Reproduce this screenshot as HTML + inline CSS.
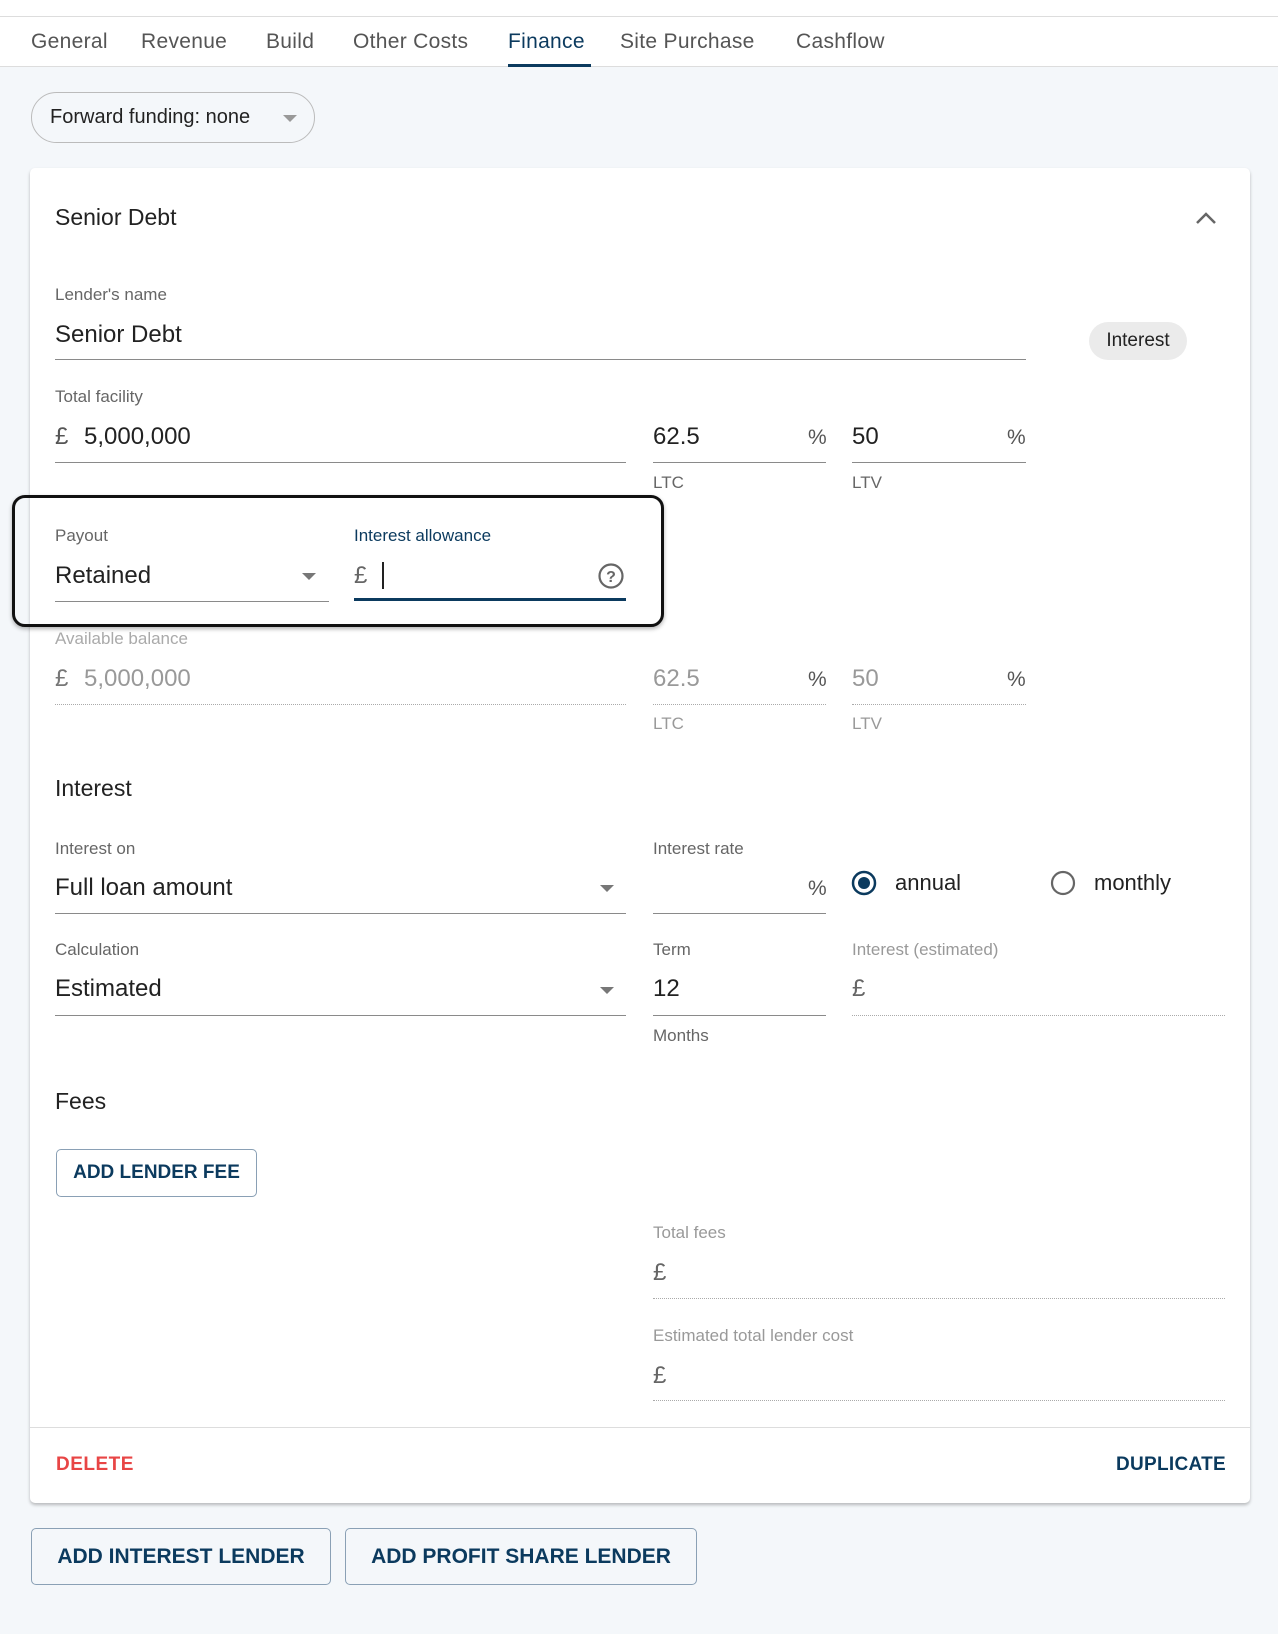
<!DOCTYPE html>
<html><head><meta charset="utf-8"><style>
*{margin:0;padding:0;box-sizing:border-box}
body{width:1278px;height:1634px;background:#f4f7fa;font-family:"Liberation Sans",sans-serif;position:relative;overflow:hidden;color:#222}
.a{position:absolute;white-space:nowrap}
.t{height:30px;line-height:30px}
.lab{font-size:17px;color:#666}
.val{font-size:24px;color:#222}
.dis{color:#999}
.ul{position:absolute;height:1px;background:#8a8a8a}
.dot{position:absolute;height:0;border-top:1px dotted #aaa}
.btn{position:absolute;border:1px solid #8aa0b5;border-radius:5px;color:#0b3a5e;font-weight:bold;letter-spacing:0;display:flex;align-items:center;justify-content:center}
.tab{font-size:21px;color:#555;letter-spacing:.3px}
</style></head><body>
<div class="a" style="left:0;top:0;width:1278px;height:67px;background:#fff;border-bottom:1px solid #ddd"></div>
<div class="a" style="left:0;top:16px;width:1278px;height:1px;background:#ddd"></div>
<div class="a t tab" style="left:31px;top:27px">General</div>
<div class="a t tab" style="left:141px;top:27px">Revenue</div>
<div class="a t tab" style="left:266px;top:27px">Build</div>
<div class="a t tab" style="left:353px;top:27px">Other Costs</div>
<div class="a t tab" style="left:508px;top:27px;color:#0b3a5e">Finance</div>
<div class="a" style="left:508px;top:64px;width:83px;height:3px;background:#0b3a5e"></div>
<div class="a t tab" style="left:620px;top:27px">Site Purchase</div>
<div class="a t tab" style="left:796px;top:27px">Cashflow</div>

<div class="a" style="left:31px;top:92px;width:284px;height:51px;border:1px solid #bbb;border-radius:26px;background:#f4f7fa"></div>
<div class="a t" style="left:50px;top:102px;font-size:20px;color:#222">Forward funding: none</div>
<div class="a" style="left:283px;top:115px;border-left:7px solid transparent;border-right:7px solid transparent;border-top:7px solid #999"></div>

<div class="a" style="left:30px;top:168px;width:1220px;height:1335px;background:#fff;border-radius:5px;box-shadow:0 2px 3px rgba(0,0,0,.25)"></div>
<div class="a t" style="left:55px;top:202px;font-size:23px">Senior Debt</div>
<svg class="a" style="left:1194px;top:208px" width="24" height="20"><path d="M3 15 L12 6 L21 15" fill="none" stroke="#666" stroke-width="2.5"/></svg>

<div class="a t lab" style="left:55px;top:280px">Lender's name</div>
<div class="a t val" style="left:55px;top:320px">Senior Debt</div>
<div class="ul" style="left:55px;top:359px;width:971px"></div>
<div class="a" style="left:1089px;top:322px;width:98px;height:38px;border-radius:19px;background:#ebebeb;font-size:19px;line-height:38px;text-align:center;color:#222">Interest</div>

<div class="a t lab" style="left:55px;top:382px">Total facility</div>
<div class="a t val" style="left:55px;top:422px;color:#555">£</div>
<div class="a t val" style="left:84px;top:422px">5,000,000</div>
<div class="ul" style="left:55px;top:462px;width:571px"></div>
<div class="a t val" style="left:653px;top:422px">62.5</div>
<div class="a t val" style="left:808px;top:423px;font-size:21px;color:#555">%</div>
<div class="ul" style="left:653px;top:462px;width:173px"></div>
<div class="a t val" style="left:852px;top:422px">50</div>
<div class="a t val" style="left:1007px;top:423px;font-size:21px;color:#555">%</div>
<div class="ul" style="left:852px;top:462px;width:174px"></div>
<div class="a t lab" style="left:653px;top:468px">LTC</div>
<div class="a t lab" style="left:852px;top:468px">LTV</div>

<div class="a" style="left:12px;top:495px;width:652px;height:132px;border:3px solid #111;border-radius:13px;box-shadow:0 2px 4px rgba(0,0,0,.3)"></div>
<div class="a t lab" style="left:55px;top:521px">Payout</div>
<div class="a t val" style="left:55px;top:561px">Retained</div>
<div class="a" style="left:302px;top:573px;border-left:7px solid transparent;border-right:7px solid transparent;border-top:7px solid #777"></div>
<div class="ul" style="left:55px;top:601px;width:274px"></div>
<div class="a t lab" style="left:354px;top:521px;color:#0b3a5e">Interest allowance</div>
<div class="a t val" style="left:354px;top:561px;color:#666">£</div>
<div class="a" style="left:382px;top:562px;width:2px;height:27px;background:#222"></div>
<svg class="a" style="left:597px;top:562px" width="28" height="28"><circle cx="14" cy="14" r="11.5" fill="none" stroke="#666" stroke-width="2.2"/><text x="14" y="20" text-anchor="middle" font-family="Liberation Sans" font-size="16" font-weight="bold" fill="#666">?</text></svg>
<div class="a" style="left:354px;top:598px;width:272px;height:3px;background:#0b3a5e"></div>

<div class="a t lab dis" style="left:55px;top:624px;color:#aaa">Available balance</div>
<div class="a t val dis" style="left:55px;top:664px;color:#777">£</div>
<div class="a t val dis" style="left:84px;top:664px">5,000,000</div>
<div class="dot" style="left:55px;top:704px;width:571px"></div>
<div class="a t val dis" style="left:653px;top:664px">62.5</div>
<div class="a t val" style="left:808px;top:665px;font-size:21px;color:#555">%</div>
<div class="dot" style="left:653px;top:704px;width:173px"></div>
<div class="a t val dis" style="left:852px;top:664px">50</div>
<div class="a t val" style="left:1007px;top:665px;font-size:21px;color:#555">%</div>
<div class="dot" style="left:852px;top:704px;width:174px"></div>
<div class="a t lab" style="left:653px;top:709px;color:#999">LTC</div>
<div class="a t lab" style="left:852px;top:709px;color:#999">LTV</div>

<div class="a t" style="left:55px;top:773px;font-size:23px">Interest</div>

<div class="a t lab" style="left:55px;top:834px">Interest on</div>
<div class="a t val" style="left:55px;top:873px">Full loan amount</div>
<div class="a" style="left:600px;top:885px;border-left:7px solid transparent;border-right:7px solid transparent;border-top:7px solid #777"></div>
<div class="ul" style="left:55px;top:913px;width:571px"></div>
<div class="a t lab" style="left:653px;top:834px">Interest rate</div>
<div class="a t val" style="left:808px;top:874px;font-size:21px;color:#555">%</div>
<div class="ul" style="left:653px;top:913px;width:173px"></div>
<svg class="a" style="left:850px;top:869px" width="28" height="28"><circle cx="14" cy="14" r="11" fill="none" stroke="#0b3a5e" stroke-width="2.5"/><circle cx="14" cy="14" r="6" fill="#0b3a5e"/></svg>
<div class="a t val" style="left:895px;top:868px;font-size:22px">annual</div>
<svg class="a" style="left:1049px;top:869px" width="28" height="28"><circle cx="14" cy="14" r="11" fill="none" stroke="#666" stroke-width="2.2"/></svg>
<div class="a t val" style="left:1094px;top:868px;font-size:22px">monthly</div>

<div class="a t lab" style="left:55px;top:935px">Calculation</div>
<div class="a t val" style="left:55px;top:974px">Estimated</div>
<div class="a" style="left:600px;top:987px;border-left:7px solid transparent;border-right:7px solid transparent;border-top:7px solid #777"></div>
<div class="ul" style="left:55px;top:1015px;width:571px"></div>
<div class="a t lab" style="left:653px;top:935px">Term</div>
<div class="a t val" style="left:653px;top:974px">12</div>
<div class="ul" style="left:653px;top:1015px;width:173px"></div>
<div class="a t lab" style="left:653px;top:1021px">Months</div>
<div class="a t lab" style="left:852px;top:935px;color:#999">Interest (estimated)</div>
<div class="a t val" style="left:852px;top:974px;color:#666">£</div>
<div class="dot" style="left:852px;top:1015px;width:373px"></div>

<div class="a t" style="left:55px;top:1086px;font-size:23px">Fees</div>
<div class="btn" style="left:56px;top:1149px;width:201px;height:48px;font-size:19px">ADD LENDER FEE</div>

<div class="a t lab" style="left:653px;top:1218px;color:#999">Total fees</div>
<div class="a t val" style="left:653px;top:1258px;color:#666">£</div>
<div class="dot" style="left:653px;top:1298px;width:572px"></div>
<div class="a t lab" style="left:653px;top:1321px;color:#999">Estimated total lender cost</div>
<div class="a t val" style="left:653px;top:1361px;color:#666">£</div>
<div class="dot" style="left:653px;top:1400px;width:572px"></div>

<div class="a" style="left:30px;top:1427px;width:1220px;height:1px;background:#ddd"></div>
<div class="a t" style="left:56px;top:1450px;font-size:19px;font-weight:bold;color:#e84545;letter-spacing:.5px">DELETE</div>
<div class="a t" style="left:1116px;top:1450px;font-size:19px;font-weight:bold;color:#0b3a5e;letter-spacing:.3px">DUPLICATE</div>

<div class="btn" style="left:31px;top:1528px;width:300px;height:57px;font-size:21px">ADD INTEREST LENDER</div>
<div class="btn" style="left:345px;top:1528px;width:352px;height:57px;font-size:21px">ADD PROFIT SHARE LENDER</div>
</body></html>
